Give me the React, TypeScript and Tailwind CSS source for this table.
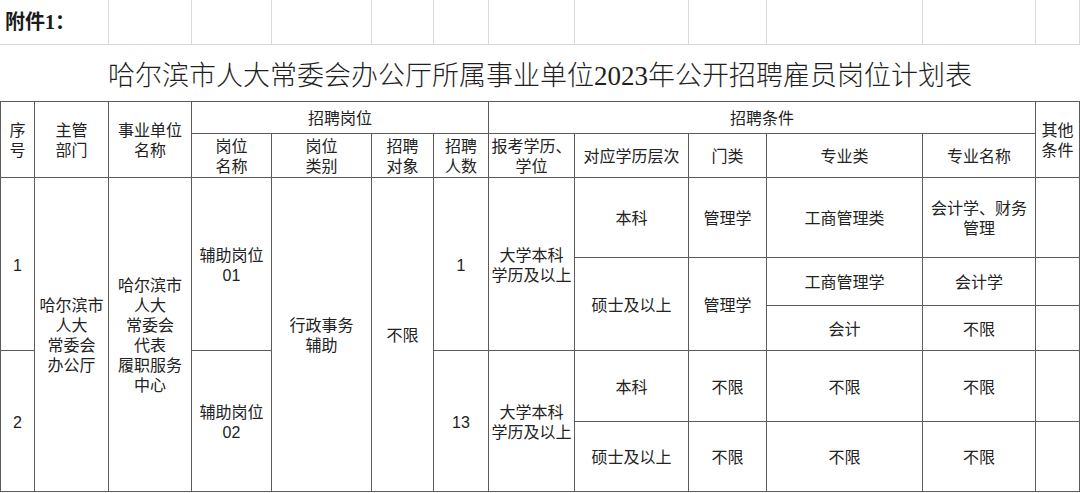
import React from "react";

type CellProps = {
  className?: string;
  children?: React.ReactNode;
};

// table cell: right/bottom rule, content centred
function Cell({ className = "", children }: CellProps) {
  return (
    <div
      className={`flex items-center justify-center border-r border-b border-[#5c5c5c] pt-[3px] text-center leading-[20px] ${className}`}
    >
      {children}
    </div>
  );
}

// light sheet gridline cell above the table
function Sheet({ className = "" }: { className?: string }) {
  return <div className={`border-r border-b border-[#d9d9d9] ${className}`} />;
}

export default function App() {
  return (
    <div
      className="grid h-[493px] w-[1080px] grid-cols-[35px_74px_83px_80px_100px_62px_55px_86px_114px_78px_156px_113px_44px] grid-rows-[45px_57px_32px_44px_80px_48px_45px_71px_70px] bg-white text-[16px] text-[#222]"
      style={{ fontFamily: '"Liberation Sans", "Noto Sans CJK SC", sans-serif' }}
    >
      {/* row 1 */}
      <div
        className="col-span-2 col-start-1 row-start-1 flex items-center border-r border-b border-[#d9d9d9] pl-[5px] text-[20px] font-bold text-[#1a1a1a]"
        style={{ fontFamily: '"Liberation Serif", "Noto Sans CJK SC", serif' }}
      >
        附件1：
      </div>
      <Sheet className="col-start-3 row-start-1" />
      <Sheet className="col-start-4 row-start-1" />
      <Sheet className="col-start-5 row-start-1" />
      <Sheet className="col-start-6 row-start-1" />
      <Sheet className="col-start-7 row-start-1" />
      <Sheet className="col-start-8 row-start-1" />
      <Sheet className="col-start-9 row-start-1" />
      <Sheet className="col-start-10 row-start-1" />
      <Sheet className="col-start-11 row-start-1" />
      <Sheet className="col-start-12 row-start-1" />
      <Sheet className="col-start-13 row-start-1" />

      {/* title */}
      <div
        className="col-span-13 col-start-1 row-start-2 flex items-center justify-center border-b border-[#5c5c5c] pt-[6px] text-[27px] font-light text-[#1f1f1f]"
        style={{ fontFamily: '"Liberation Serif", "Noto Sans CJK SC", serif' }}
      >
        哈尔滨市人大常委会办公厅所属事业单位2023年公开招聘雇员岗位计划表
      </div>

      {/* header */}
      <Cell className="col-start-1 row-span-2 row-start-3 border-l">
        序<br />号
      </Cell>
      <Cell className="col-start-2 row-span-2 row-start-3">
        主管<br />部门
      </Cell>
      <Cell className="col-start-3 row-span-2 row-start-3">
        事业单位<br />名称
      </Cell>
      <Cell className="col-span-4 col-start-4 row-start-3">招聘岗位</Cell>
      <Cell className="col-span-5 col-start-8 row-start-3">招聘条件</Cell>
      <Cell className="col-start-13 row-span-2 row-start-3">
        其他<br />条件
      </Cell>

      <Cell className="col-start-4 row-start-4">
        岗位<br />名称
      </Cell>
      <Cell className="col-start-5 row-start-4">
        岗位<br />类别
      </Cell>
      <Cell className="col-start-6 row-start-4">
        招聘<br />对象
      </Cell>
      <Cell className="col-start-7 row-start-4">
        招聘<br />人数
      </Cell>
      <Cell className="col-start-8 row-start-4">
        报考学历、<br />学位
      </Cell>
      <Cell className="col-start-9 row-start-4">对应学历层次</Cell>
      <Cell className="col-start-10 row-start-4">门类</Cell>
      <Cell className="col-start-11 row-start-4">专业类</Cell>
      <Cell className="col-start-12 row-start-4">专业名称</Cell>

      {/* body: shared cells */}
      <Cell className="col-start-1 row-span-3 row-start-5 border-l">1</Cell>
      <Cell className="col-start-1 row-span-2 row-start-8 border-l">2</Cell>
      <Cell className="col-start-2 row-span-5 row-start-5">
        哈尔滨市<br />人大<br />常委会<br />办公厅
      </Cell>
      <Cell className="col-start-3 row-span-5 row-start-5">
        哈尔滨市<br />人大<br />常委会<br />代表<br />履职服务<br />中心
      </Cell>
      <Cell className="col-start-4 row-span-3 row-start-5">
        辅助岗位<br />01
      </Cell>
      <Cell className="col-start-4 row-span-2 row-start-8">
        辅助岗位<br />02
      </Cell>
      <Cell className="col-start-5 row-span-5 row-start-5">
        行政事务<br />辅助
      </Cell>
      <Cell className="col-start-6 row-span-5 row-start-5">不限</Cell>
      <Cell className="col-start-7 row-span-3 row-start-5">1</Cell>
      <Cell className="col-start-7 row-span-2 row-start-8">13</Cell>
      <Cell className="col-start-8 row-span-3 row-start-5">
        大学本科<br />学历及以上
      </Cell>
      <Cell className="col-start-8 row-span-2 row-start-8">
        大学本科<br />学历及以上
      </Cell>

      {/* post 01 */}
      <Cell className="col-start-9 row-start-5">本科</Cell>
      <Cell className="col-start-10 row-start-5">管理学</Cell>
      <Cell className="col-start-11 row-start-5">工商管理类</Cell>
      <Cell className="col-start-12 row-start-5">
        会计学、财务<br />管理
      </Cell>
      <Cell className="col-start-13 row-start-5" />

      <Cell className="col-start-9 row-span-2 row-start-6">硕士及以上</Cell>
      <Cell className="col-start-10 row-span-2 row-start-6">管理学</Cell>
      <Cell className="col-start-11 row-start-6">工商管理学</Cell>
      <Cell className="col-start-12 row-start-6">会计学</Cell>
      <Cell className="col-start-13 row-start-6" />
      <Cell className="col-start-11 row-start-7">会计</Cell>
      <Cell className="col-start-12 row-start-7">不限</Cell>
      <Cell className="col-start-13 row-start-7" />

      {/* post 02 */}
      <Cell className="col-start-9 row-start-8">本科</Cell>
      <Cell className="col-start-10 row-start-8">不限</Cell>
      <Cell className="col-start-11 row-start-8">不限</Cell>
      <Cell className="col-start-12 row-start-8">不限</Cell>
      <Cell className="col-start-13 row-start-8" />

      <Cell className="col-start-9 row-start-9">硕士及以上</Cell>
      <Cell className="col-start-10 row-start-9">不限</Cell>
      <Cell className="col-start-11 row-start-9">不限</Cell>
      <Cell className="col-start-12 row-start-9">不限</Cell>
      <Cell className="col-start-13 row-start-9" />
    </div>
  );
}
